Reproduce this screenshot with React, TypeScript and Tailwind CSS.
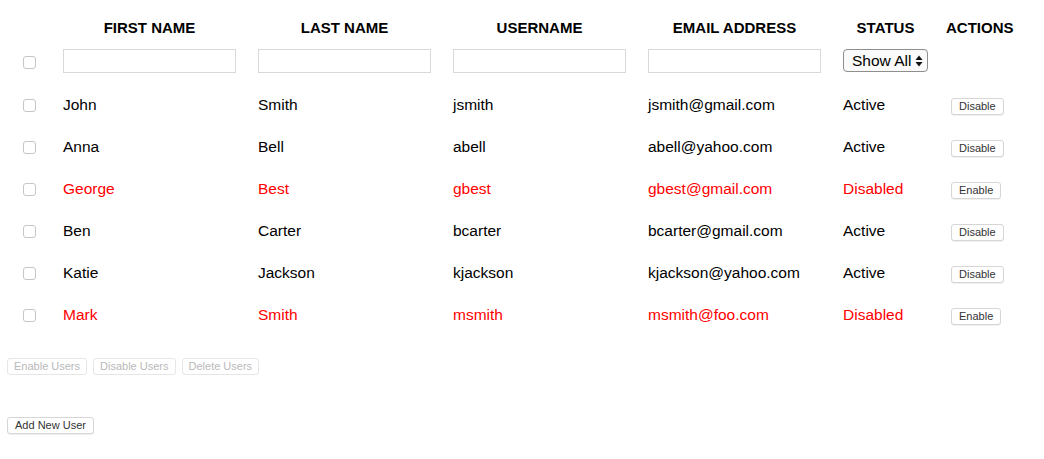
const users = [
  { first: "John", last: "Smith", username: "jsmith", email: "jsmith@gmail.com", active: true },
  { first: "Anna", last: "Bell", username: "abell", email: "abell@yahoo.com", active: true },
  { first: "George", last: "Best", username: "gbest", email: "gbest@gmail.com", active: false },
  { first: "Ben", last: "Carter", username: "bcarter", email: "bcarter@gmail.com", active: true },
  { first: "Katie", last: "Jackson", username: "kjackson", email: "kjackson@yahoo.com", active: true },
  { first: "Mark", last: "Smith", username: "msmith", email: "msmith@foo.com", active: false },
];

const cols = "grid grid-cols-[59px_195px_195px_195px_195px_97px_1fr]";

function Checkbox() {
  return <span className="block h-[13px] w-[13px] rounded-[3px] border border-[#c6c6c6] bg-white" />;
}

function SmallButton({ label, muted }: { label: string; muted?: boolean }) {
  return (
    <button
      className={
        muted
          ? "h-[17px] rounded-[3px] border border-[#e6e6e6] bg-white px-[6px] text-[11px] leading-[15px] text-[#b9b9b9]"
          : "h-[17px] rounded-[3px] border border-[#d6d6d6] bg-white px-[7px] text-[11px] leading-[15px] text-[#333] shadow-[0_1px_0_rgba(0,0,0,0.06)]"
      }
    >
      {label}
    </button>
  );
}

export default function App() {
  return (
    <div className="h-[459px] w-[1044px] bg-white font-['Liberation_Sans',Arial,sans-serif] text-black">
      {/* Header */}
      <div className={`${cols} h-[46px] pt-[19px] text-[15px] font-bold leading-[17px]`}>
        <div />
        <div className="pl-[4px]"><div className="w-[173px] text-center">FIRST NAME</div></div>
        <div className="pl-[4px]"><div className="w-[173px] text-center">LAST NAME</div></div>
        <div className="pl-[4px]"><div className="w-[173px] text-center">USERNAME</div></div>
        <div className="pl-[4px]"><div className="w-[173px] text-center">EMAIL ADDRESS</div></div>
        <div className="pl-[4px]"><div className="w-[85px] text-center">STATUS</div></div>
        <div className="pl-[10px]">ACTIONS</div>
      </div>

      {/* Filters */}
      <div className={`${cols} h-[38px] items-start`}>
        <div className="flex justify-center pt-[10px]"><Checkbox /></div>
        {[0, 1, 2, 3].map((i) => (
          <div key={i} className="pl-[4px] pt-[3px]">
            <div className="h-[24px] w-[173px] border border-[#d9d9d9] bg-white" />
          </div>
        ))}
        <div className="pl-[4px] pt-[3px]">
          <div className="flex h-[23px] w-[85px] items-center justify-between rounded-[4px] border border-[#8e8e8e] bg-[#fafafa] pl-[8px] pr-[4px] text-[15.5px]">
            <span>Show All</span>
            <svg width="8" height="12" viewBox="0 0 8 12">
              <path d="M4 0.5 L7.5 5 L0.5 5 Z" fill="#111" />
              <path d="M4 11.5 L7.5 7 L0.5 7 Z" fill="#111" />
            </svg>
          </div>
        </div>
        <div />
      </div>

      {/* Rows */}
      {users.map((u) => (
        <div
          key={u.username}
          className={`${cols} h-[42px] items-center text-[15.5px] ${u.active ? "text-black" : "text-[#ff0000]"}`}
        >
          <div className="flex justify-center"><Checkbox /></div>
          <div className="pl-[4px]">{u.first}</div>
          <div className="pl-[4px]">{u.last}</div>
          <div className="pl-[4px]">{u.username}</div>
          <div className="pl-[4px]">{u.email}</div>
          <div className="pl-[4px]">{u.active ? "Active" : "Disabled"}</div>
          <div className="pl-[15px]">
            <SmallButton label={u.active ? "Disable" : "Enable"} />
          </div>
        </div>
      ))}

      {/* Bulk actions */}
      <div className="mt-[22px] flex gap-[6px] pl-[7px]">
        <SmallButton label="Enable Users" muted />
        <SmallButton label="Disable Users" muted />
        <SmallButton label="Delete Users" muted />
      </div>

      <div className="mt-[37px] pl-[7px]">
        <SmallButton label="Add New User" />
      </div>
    </div>
  );
}
